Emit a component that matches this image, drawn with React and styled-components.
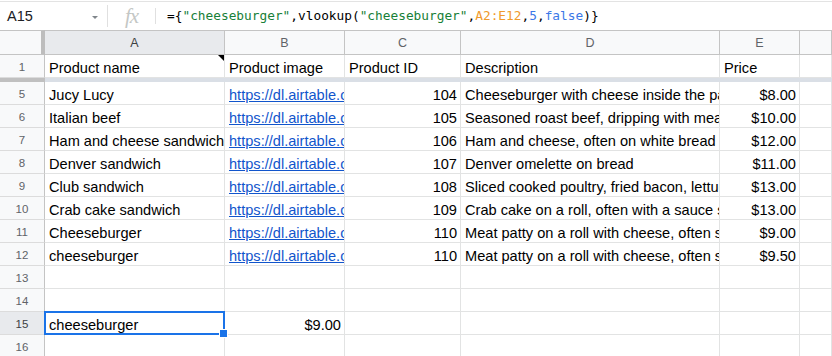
import React from 'react'
import styled, { createGlobalStyle } from 'styled-components'

const GlobalStyle = createGlobalStyle`
  html, body {
    margin: 0;
    padding: 0;
    background: #ffffff;
    overflow: hidden;
  }
  body {
    width: 832px;
    height: 356px;
    font-family: "Liberation Sans", Arial, sans-serif;
  }
`

const Page = styled.div`
  width: 832px;
  height: 356px;
  overflow: hidden;
  background: #fff;
`

const FormulaBar = styled.div`
  display: flex;
  align-items: center;
  height: 28px;
  margin-top: 1px;
  border-top: 1px solid #e3e3e3;
  background: #fff;
`

const NameBox = styled.div`
  display: flex;
  align-items: center;
  justify-content: space-between;
  width: 107px;
  height: 100%;
  padding: 0 9px 0 7px;
  box-sizing: border-box;
  font-size: 14.5px;
  color: #202124;
`

const Caret = styled.span`
  width: 0;
  height: 0;
  margin-top: 2px;
  border-left: 3px solid transparent;
  border-right: 3px solid transparent;
  border-top: 3px solid #80868b;
`

const Divider = styled.div`
  width: 1px;
  height: ${(p) => p.$h}px;
  background: #e0e0e0;
`

const Fx = styled.div`
  width: 47px;
  text-align: center;
  font-family: "Liberation Serif", "DejaVu Serif", serif;
  font-style: italic;
  font-size: 21px;
  color: #c4c7c5;
  letter-spacing: -1px;
  line-height: 28px;
`

const Formula = styled.div`
  padding-left: 11px;
  font-family: "DejaVu Sans Mono", "Liberation Mono", monospace;
  font-size: 12.8px;
  color: #000;
  white-space: pre;
  line-height: 28px;
`

const Token = styled.span`
  color: ${(p) => p.$c || '#000'};
`

const Sheet = styled.div`
  display: grid;
  grid-template-columns: 45px 180px 120px 116px 259px 80px 1fr;
  grid-template-rows: 25px 23px 4px repeat(12, 23px);
  font-size: 14.6px;
  color: #000;
`

const Corner = styled.div`
  background: #f8f9fa;
  border-top: 1px solid #c4c4c4;
  border-bottom: 1px solid #c4c4c4;
  border-right: 4px solid #bdbdbd;
  box-sizing: border-box;
`

const ColHead = styled.div`
  display: flex;
  align-items: center;
  justify-content: center;
  background: ${(p) => (p.$active ? '#e8eaed' : '#f8f9fa')};
  border-top: 1px solid #c4c4c4;
  border-right: 1px solid #c4c4c4;
  border-bottom: 1px solid #c4c4c4;
  box-sizing: border-box;
  font-size: 12.5px;
  color: ${(p) => (p.$active ? '#3c4043' : '#5f6368')};
  padding-top: 1px;
`

const RowHead = styled.div`
  display: flex;
  align-items: center;
  justify-content: center;
  background: ${(p) => (p.$active ? '#e8eaed' : '#f8f9fa')};
  border-right: 1px solid #c4c4c4;
  border-bottom: 1px solid #dcdcdc;
  box-sizing: border-box;
  font-size: 11.5px;
  color: ${(p) => (p.$active ? '#3c4043' : '#5f6368')};
  padding-top: 1px;
`

const Cell = styled.div`
  position: relative;
  border-right: 1px solid #e2e3e3;
  border-bottom: 1px solid #e2e3e3;
  box-sizing: border-box;
  padding: 5px ${(p) => (p.$right ? '3px' : '0')} 0 ${(p) => (p.$right ? '0' : '4px')};
  line-height: 17px;
  white-space: nowrap;
  overflow: ${(p) => (p.$overlay ? 'visible' : 'hidden')};
  text-align: ${(p) => (p.$right ? 'right' : 'left')};
  ${(p) =>
    p.$note &&
    `
    &::after {
      content: '';
      position: absolute;
      top: 0;
      right: 0;
      border-top: 6px solid #000;
      border-left: 6px solid transparent;
    }
  `}
`

const Link = styled.span`
  color: #1155cc;
  text-decoration: underline;
`

const FreezeBar = styled.div`
  grid-column: ${(p) => (p.$head ? '1 / 2' : '2 / -1')};
  background: ${(p) => (p.$head ? '#c0c0c0' : '#dadfe6')};
`

const Selection = styled.div`
  position: absolute;
  z-index: 2;
  left: -1px;
  top: -1px;
  right: -1px;
  bottom: -1px;
  border: 2px solid #1a73e8;
  pointer-events: none;
`

const Handle = styled.div`
  position: absolute;
  right: -5px;
  bottom: -5px;
  width: 7px;
  height: 7px;
  background: #1a73e8;
  border: 1px solid #fff;
`

const link = 'https://dl.airtable.com/.attachments/burger.jpg'

const products = [
  [5, 'Jucy Lucy', 104, 'Cheeseburger with cheese inside the patty', '$8.00'],
  [6, 'Italian beef', 105, 'Seasoned roast beef, dripping with meat juices', '$10.00'],
  [7, 'Ham and cheese sandwich', 106, 'Ham and cheese, often on white bread', '$12.00'],
  [8, 'Denver sandwich', 107, 'Denver omelette on bread', '$11.00'],
  [9, 'Club sandwich', 108, 'Sliced cooked poultry, fried bacon, lettuce and tomato', '$13.00'],
  [10, 'Crab cake sandwich', 109, 'Crab cake on a roll, often with a sauce such as tartar', '$13.00'],
  [11, 'Cheeseburger', 110, 'Meat patty on a roll with cheese, often served with fries', '$9.00'],
  [12, 'cheeseburger', 110, 'Meat patty on a roll with cheese, often served with fries', '$9.50'],
]

const EmptyRow = ({ n, active, children }) => (
  <>
    <RowHead $active={active}>{n}</RowHead>
    {children || (
      <>
        <Cell />
        <Cell />
      </>
    )}
    <Cell />
    <Cell />
    <Cell />
    <Cell />
  </>
)

const App = () => {
  return (
    <Page>
      <GlobalStyle />
      <FormulaBar>
        <NameBox>
          A15
          <Caret />
        </NameBox>
        <Divider $h={22} />
        <Fx>fx</Fx>
        <Divider $h={16} />
        <Formula>
          <Token>={'{'}</Token>
          <Token $c="#188038">"cheeseburger"</Token>
          <Token>,vlookup(</Token>
          <Token $c="#188038">"cheeseburger"</Token>
          <Token>,</Token>
          <Token $c="#f09a2c">A2:E12</Token>
          <Token>,</Token>
          <Token $c="#3b78e7">5</Token>
          <Token>,</Token>
          <Token $c="#3b78e7">false</Token>
          <Token>){'}'}</Token>
        </Formula>
      </FormulaBar>

      <Sheet>
        <Corner />
        <ColHead $active>A</ColHead>
        <ColHead>B</ColHead>
        <ColHead>C</ColHead>
        <ColHead>D</ColHead>
        <ColHead>E</ColHead>
        <ColHead />

        <RowHead>1</RowHead>
        <Cell $note>Product name</Cell>
        <Cell>Product image</Cell>
        <Cell>Product ID</Cell>
        <Cell>Description</Cell>
        <Cell>Price</Cell>
        <Cell />

        <FreezeBar $head />
        <FreezeBar />

        {products.map(([n, name, id, desc, price]) => (
          <React.Fragment key={n}>
            <RowHead>{n}</RowHead>
            <Cell>{name}</Cell>
            <Cell>
              <Link>{link}</Link>
            </Cell>
            <Cell $right>{id}</Cell>
            <Cell>{desc}</Cell>
            <Cell $right>{price}</Cell>
            <Cell />
          </React.Fragment>
        ))}

        <EmptyRow n={13} />
        <EmptyRow n={14} />
        <EmptyRow n={15} active>
          <Cell $overlay>
            cheeseburger
            <Selection>
              <Handle />
            </Selection>
          </Cell>
          <Cell $right>$9.00</Cell>
        </EmptyRow>
        <EmptyRow n={16} />
      </Sheet>
    </Page>
  )
}

export default App
